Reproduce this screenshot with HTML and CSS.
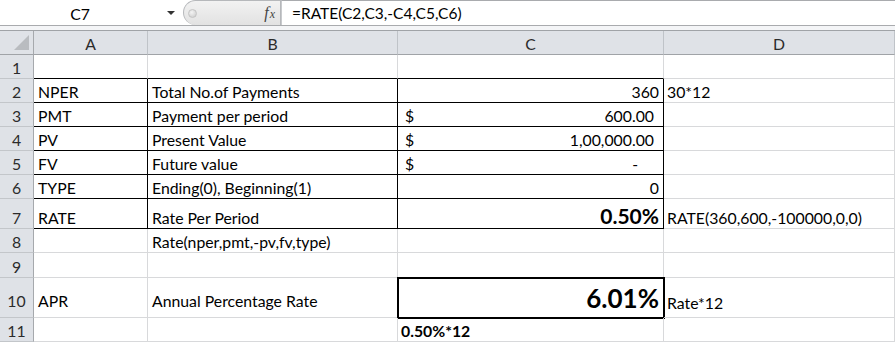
FILE: index.html
```html
<!DOCTYPE html>
<html>
<head>
<meta charset="utf-8">
<link rel="stylesheet" href="styles.css">
</head>
<body>
<div class="app">
  <div class="fbar">
    <div class="namebox"><span class="ref">C7</span><span class="dd"></span></div>
    <div class="pill"><span class="dot"></span><span class="fx"><i>f</i><span class="fxx">x</span></span></div>
    <div class="formula">=RATE(C2,C3,-C4,C5,C6)</div>
  </div>
  <div class="gap"></div>
  <div class="sheet">
    <div class="hd corner"><span class="tri"></span></div>
    <div class="hd col">A</div>
    <div class="hd col">B</div>
    <div class="hd col">C</div>
    <div class="hd col">D</div>

    <div class="rh">1</div>
    <div class="c bb"></div><div class="c bb"></div><div class="c bb"></div><div class="c"></div>

    <div class="rh">2</div>
    <div class="c bx">NPER</div><div class="c bx">Total No.of Payments</div><div class="c bx num">360</div><div class="c d">30*12</div>

    <div class="rh">3</div>
    <div class="c bx">PMT</div><div class="c bx">Payment per period</div><div class="c bx acc"><span>$</span><span>600.00</span></div><div class="c"></div>

    <div class="rh">4</div>
    <div class="c bx">PV</div><div class="c bx">Present Value</div><div class="c bx acc"><span>$</span><span>1,00,000.00</span></div><div class="c"></div>

    <div class="rh">5</div>
    <div class="c bx">FV</div><div class="c bx">Future value</div><div class="c bx acc"><span>$</span><span class="dash">-</span></div><div class="c"></div>

    <div class="rh">6</div>
    <div class="c bx">TYPE</div><div class="c bx">Ending(0), Beginning(1)</div><div class="c bx num">0</div><div class="c"></div>

    <div class="rh">7</div>
    <div class="c bx">RATE</div><div class="c bx">Rate Per Period</div><div class="c bx num big1">0.50%</div><div class="c d">RATE(360,600,-100000,0,0)</div>

    <div class="rh">8</div>
    <div class="c"></div><div class="c">Rate(nper,pmt,-pv,fv,type)</div><div class="c"></div><div class="c"></div>

    <div class="rh">9</div>
    <div class="c"></div><div class="c"></div><div class="c"></div><div class="c"></div>

    <div class="rh r10">10</div>
    <div class="c r10">APR</div><div class="c r10">Annual Percentage Rate</div><div class="c num big2 thick">6.01%</div><div class="c d r10d">Rate*12</div>

    <div class="rh">11</div>
    <div class="c"></div><div class="c"></div><div class="c bold">0.50%*12</div><div class="c"></div>
  </div>
</div>
</body>
</html>
```

FILE: styles.css
```css
html, body {
  margin: 0;
  padding: 0;
  background: #ffffff;
}

.app {
  width: 895px;
  height: 342px;
  overflow: hidden;
  font-family: Lato, "Liberation Sans", sans-serif;
  font-size: 15.8px;
  color: #000;
}

.fbar {
  display: flex;
  height: 25px;
  border-bottom: 1px solid #a9abae;
  background: #fff;
}

.namebox {
  width: 183px;
  display: flex;
  align-items: center;
}

.ref {
  width: 160px;
  text-align: center;
  color: #000;
  padding-top: 1px;
}

.dd {
  width: 0;
  height: 0;
  margin-left: 7px;
  border-left: 4px solid transparent;
  border-right: 4px solid transparent;
  border-top: 4px solid #333;
}

.pill {
  width: 98px;
  display: flex;
  align-items: center;
  justify-content: space-between;
  box-sizing: border-box;
  padding: 0 5px 0 4px;
  background: linear-gradient(#f2f2f2, #e2e2e2);
  border: 1px solid #b6b8bb;
  border-bottom: none;
  border-radius: 13px 0 0 13px;
  height: 25px;
}

.dot {
  width: 9px;
  height: 9px;
  border-radius: 50%;
  background: radial-gradient(circle at 40% 35%, #f4f4f4, #c9c9c9);
  border: 1px solid #c4c4c4;
  box-sizing: border-box;
}

.fx {
  font-family: "Liberation Serif", serif;
  font-size: 16px;
  color: #444;
  display: flex;
  align-items: baseline;
}

.fx i {
  font-style: italic;
}

.fxx {
  font-style: italic;
  font-size: 12px;
  margin-left: 1px;
}

.formula {
  flex: 1;
  border-top: 1px solid #a9abae;
  border-left: 1px solid #c8cacd;
  padding-left: 10px;
  display: flex;
  align-items: center;
  box-sizing: border-box;
  height: 25px;
  font-size: 15.5px;
}

.gap {
  height: 4px;
  background: #f4f5f7;
}

.sheet {
  display: grid;
  grid-template-columns: 34px 114px 250px 266px 1fr;
  grid-template-rows: 24px 24px 24px 24px 24px 24px 24px 30px 24px 25px 40px 24px;
  border-top: 1px solid #a0a3a7;
}

.sheet > div {
  box-sizing: border-box;
  border-right: 1px solid #d8d9db;
  border-bottom: 1px solid #d8d9db;
  display: flex;
  min-width: 0;
  white-space: nowrap;
}

.hd {
  background: #dfe2e7;
  color: #2b2b2b;
  align-items: center;
  justify-content: center;
}

.sheet > .hd {
  border-bottom: 1px solid #a0a3a7;
  border-right: 1px solid #bfc3c8;
}

.sheet > .corner {
  border-right: 1px solid #a6a9ad;
  position: relative;
}

.tri {
  position: absolute;
  right: 4px;
  bottom: 4px;
  width: 0;
  height: 0;
  border-left: 15px solid transparent;
  border-bottom: 15px solid #b9bcc0;
}

.col {
  padding-top: 1px;
}

.sheet > .rh {
  background: #dfe2e7;
  color: #2b2b2b;
  justify-content: center;
  align-items: flex-end;
  padding-bottom: 1px;
  border-right: 1px solid #a6a9ad;
  border-bottom: 1px solid #c3c6ca;
  line-height: 18px;
}

.c {
  align-items: flex-end;
  padding: 0 4px 1px 4px;
  line-height: 18px;
}

.d {
  padding-left: 3px;
}

.num {
  justify-content: flex-end;
}

.acc {
  justify-content: space-between;
  padding-left: 7px;
  padding-right: 9px;
}

.dash {
  padding-right: 16px;
}

.sheet > .bb {
  border-bottom-color: #000;
}

.sheet > .bx {
  border-right-color: #000;
  border-bottom-color: #000;
}

.big1 {
  font-weight: 700;
  font-size: 21px;
  line-height: 22px;
}

.big2 {
  font-weight: 700;
  font-size: 26px;
  line-height: 28px;
  padding-bottom: 5px;
}

.sheet > .r10 {
  padding-bottom: 7px;
}

.sheet > .r10d {
  padding-bottom: 5px;
}

.thick {
  outline: 2px solid #000;
  outline-offset: -1px;
}

.bold {
  font-weight: 700;
  padding-left: 3px;
}
```
